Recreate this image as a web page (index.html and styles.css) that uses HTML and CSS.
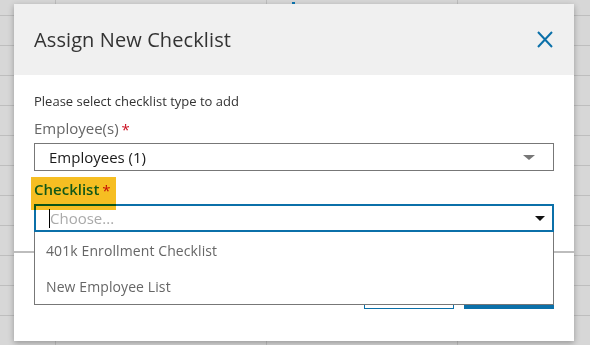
FILE: index.html
```html
<!DOCTYPE html>
<html lang="en">
<head>
  <meta charset="UTF-8">
  <title>Assign New Checklist</title>
  <link rel="stylesheet" href="styles.css">
</head>
<body>
  <span class="peek-icon"></span>

  <div class="modal">
    <div class="modal-header">
      <h2>Assign New Checklist</h2>
      <button class="close" aria-label="Close">
        <svg width="16" height="17" viewBox="0 0 16 17">
          <path d="M1 1 L15 16 M15 1 L1 16" stroke="#0b70a9" stroke-width="2" fill="none"/>
        </svg>
      </button>
    </div>

    <div class="modal-body">
      <p class="intro">Please select checklist type to add</p>

      <div class="field">
        <label class="field-label">Employee(s)<span class="req">*</span></label>
        <div class="select">
          <span class="select-value">Employees (1)</span>
          <span class="caret"></span>
        </div>
      </div>

      <div class="field">
        <span class="highlight"></span>
        <label class="field-label active">Checklist<span class="req">*</span></label>
        <div class="select-wrap">
          <div class="select focused">
            <span class="select-value placeholder"><span class="cursor"></span>Choose...</span>
            <span class="caret dark"></span>
          </div>
          <ul class="dropdown">
            <li>401k Enrollment Checklist</li>
            <li>New Employee List</li>
          </ul>
        </div>
      </div>
    </div>

    <div class="modal-footer">
      <button class="btn btn-outline">Cancel</button>
      <button class="btn btn-primary">Assign</button>
    </div>
  </div>
</body>
</html>
```

FILE: styles.css
```css
body {
  margin: 0;
  padding: 4px 0 0 14px;
  height: 345px;
  box-sizing: border-box;
  overflow: hidden;
  font-family: 'Open Sans', 'Noto Sans', sans-serif;
  color: #333;
  background-color: #d7d7d7;
  background-image:
    linear-gradient(#bebebe, #bebebe),
    linear-gradient(#bebebe, #bebebe),
    linear-gradient(#bebebe, #bebebe),
    repeating-linear-gradient(to bottom, transparent 0 15px, #bebebe 15px 16px, transparent 16px 30px);
  background-size: 1px 100%, 1px 100%, 1px 100%, 100% 100%;
  background-position: 55px 0, 266px 0, 457px 0, 0 0;
  background-repeat: no-repeat;
}
.peek-icon {
  position: absolute;
  left: 292px;
  top: 2px;
  width: 3px;
  height: 2px;
  background: #0b70a9;
}
.modal {
  width: 560px;
  background: white;
  box-shadow: 0 2px 6px rgba(0,0,0,0.3);
}
.modal-header {
  height: 71px;
  background-color: #f0f0f0;
  display: flex;
  align-items: center;
  justify-content: space-between;
  padding: 0 21px 0 20px;
}
.modal-header h2 {
  margin: 0;
  font-size: 20px;
  font-weight: 400;
  color: #333;
  letter-spacing: 0.1px;
}
.close {
  border: none;
  background: none;
  padding: 0;
  display: flex;
  cursor: pointer;
}
.modal-body {
  padding: 17px 20px 19px;
}
.intro {
  margin: 0;
  font-size: 13px;
  line-height: 18px;
}
.field {
  position: relative;
  margin-top: 8px;
}
.field-label {
  display: block;
  font-size: 15px;
  line-height: 20px;
  margin-bottom: 5px;
  color: #666;
}
.field-label.active {
  color: #1276a4;
  font-weight: 600;
}
.req {
  color: #cc1122;
  margin-left: 3px;
  font-weight: 400;
  position: relative;
  top: 1px;
}
.highlight {
  position: absolute;
  left: -3px;
  top: -2px;
  width: 85px;
  height: 33px;
  background: #f6be22;
  mix-blend-mode: multiply;
  z-index: 3;
}
.select {
  height: 28px;
  box-sizing: border-box;
  border: 1px solid #777;
  display: flex;
  align-items: center;
  justify-content: space-between;
  padding: 0 18px 0 14px;
  font-size: 15px;
  color: #1a1a1a;
}
.select.focused {
  border: 2px solid #0b70a9;
  padding: 0 7px 0 13px;
}
.select-value {
  display: flex;
  align-items: center;
}
.placeholder {
  color: #aaa;
}
.cursor {
  width: 1px;
  height: 19px;
  background: #000;
}
.caret {
  width: 0;
  height: 0;
  border-left: 6px solid transparent;
  border-right: 6px solid transparent;
  border-top: 5px solid #777;
}
.caret.dark {
  border-left-width: 5px;
  border-right-width: 5px;
  border-top-color: #111;
}
.select-wrap {
  position: relative;
}
.dropdown {
  position: absolute;
  top: 100%;
  left: 0;
  right: 0;
  margin: 0;
  padding: 0;
  list-style: none;
  background: white;
  border: 1px solid #777;
  border-top: none;
  z-index: 2;
}
.dropdown li {
  height: 36px;
  line-height: 37px;
  padding-left: 11px;
  font-size: 14px;
  color: #666;
  letter-spacing: 0.1px;
}
.modal-footer {
  border-top: 2px solid #bdbdbd;
  padding: 22px 20px 32px;
  display: flex;
  justify-content: flex-end;
  gap: 10px;
}
.btn {
  width: 90px;
  height: 34px;
  font-family: inherit;
  font-size: 14px;
  cursor: pointer;
}
.btn-outline {
  background: white;
  border: 1px solid #0b70a9;
  color: #0b70a9;
}
.btn-primary {
  background: #0b70a9;
  border: none;
  color: white;
}
```
